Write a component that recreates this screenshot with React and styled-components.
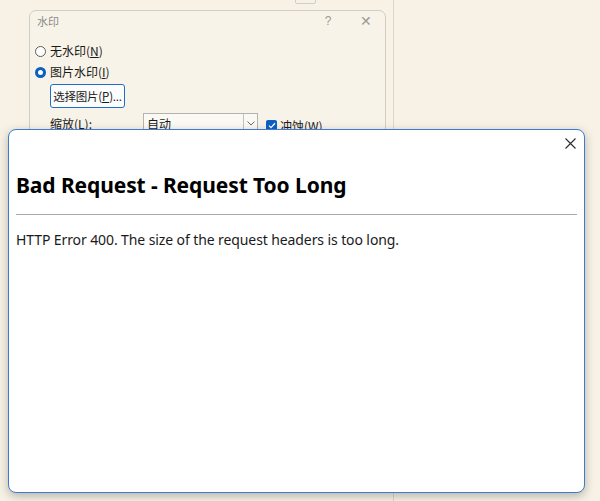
import React from "react";
import styled, { createGlobalStyle } from "styled-components";

const Global = createGlobalStyle`
  html, body { margin: 0; padding: 0; }
  body {
    width: 600px;
    height: 501px;
    overflow: hidden;
    background: #f7f2e5;
    font-family: "Noto Sans", "Noto Sans CJK SC", sans-serif;
  }
`;

const Desktop = styled.div`
  position: relative;
  width: 600px;
  height: 501px;
  overflow: hidden;
  background: #f7f2e5;
`;

/* window sitting behind everything, its right edge shows as a faint line */
const BackWindow = styled.div`
  position: absolute;
  left: -2px;
  top: -2px;
  width: 395px;
  height: 520px;
  border-right: 1px solid #d9d6ce;
  background: #f7f2e5;
`;

const Stub = styled.div`
  position: absolute;
  left: 295px;
  top: -10px;
  width: 19px;
  height: 12px;
  border: 1px solid #d0cec8;
  border-radius: 2px;
`;

const Dialog = styled.div`
  position: absolute;
  left: 29px;
  top: 10px;
  width: 355px;
  height: 200px;
  border: 1px solid #cfcdc7;
  border-radius: 7px;
  background: #f8f3e8;
  display: flex;
  flex-direction: column;
  font-family: "Noto Sans CJK SC", sans-serif;
  font-size: 12px;
  color: #1a1a1a;
`;

const TitleBar = styled.div`
  display: flex;
  align-items: center;
  height: 20px;
  padding: 0 0 0 7px;
  color: #8a8a8a;
  font-size: 11px;
`;

const TitleText = styled.span`
  flex: 1;
`;

const TitleGlyph = styled.span`
  width: 38px;
  text-align: center;
  color: #9a9a9a;
  font-family: "Liberation Sans", sans-serif;
  font-size: ${(p) => p.$size || 12}px;
`;

const Body = styled.div`
  display: flex;
  flex-direction: column;
  padding: 12px 0 0 5px;
  gap: 5px;
`;

const Option = styled.label`
  display: flex;
  align-items: center;
  gap: 4px;
  height: 16px;
  line-height: 16px;
`;

const Radio = styled.span`
  box-sizing: border-box;
  width: 11px;
  height: 11px;
  border-radius: 50%;
  border: ${(p) => (p.$on ? "3px solid #0a5fc2" : "1px solid #5c5c5c")};
  background: #fff;
`;

const Key = styled.span`
  text-decoration: underline;
  text-underline-offset: 1px;
`;

const PickButton = styled.div`
  box-sizing: border-box;
  margin: -1px 0 0 15px;
  width: 75px;
  height: 24px;
  border: 1px solid #1c6fc8;
  border-radius: 3px;
  background: #fcfcfc;
  display: flex;
  align-items: center;
  justify-content: center;
  white-space: nowrap;
  font-size: 11.5px;
  letter-spacing: -0.2px;
`;

const ScaleRow = styled.div`
  display: flex;
  align-items: center;
  margin: 0 0 0 15px;
  height: 20px;
  white-space: nowrap;
`;

const ScaleLabel = styled.span`
  width: 93px;
`;

const Select = styled.div`
  box-sizing: border-box;
  width: 115px;
  height: 20px;
  border: 1px solid #b5b3ad;
  background: #fbf9f3;
  display: flex;
  align-items: center;
`;

const SelectText = styled.span`
  flex: 1;
  padding-left: 3px;
`;

const Chevron = styled.span`
  width: 13px;
  height: 100%;
  border-left: 1px solid #c4c2bc;
  display: flex;
  align-items: center;
  justify-content: center;
`;

const Check = styled.span`
  width: 11px;
  height: 11px;
  margin: 5px 3px 0 8px;
  border-radius: 2px;
  background: #0a5fc2;
  display: flex;
  align-items: center;
  justify-content: center;
`;

const CheckText = styled.span`
  margin-top: 5px;
`;

const Modal = styled.div`
  position: absolute;
  left: 8px;
  top: 129px;
  width: 577px;
  height: 364px;
  box-sizing: border-box;
  border: 1px solid #3f7ad2;
  border-radius: 8px;
  background: #ffffff;
  box-shadow: 0 3px 10px rgba(60, 60, 60, 0.35);
  display: flex;
  flex-direction: column;
  padding: 0 7px;
`;

const ModalTop = styled.div`
  display: flex;
  justify-content: flex-end;
  height: 42px;
`;

const CloseBtn = styled.div`
  width: 12px;
  height: 12px;
  margin: 7px 1px 0 0;
  display: flex;
  align-items: center;
  justify-content: center;
`;

const Heading = styled.h2`
  margin: 0;
  font-family: "Noto Sans", sans-serif;
  font-weight: 700;
  font-size: 21px;
  line-height: 26px;
  color: #000;
  letter-spacing: -0.1px;
`;

const Rule = styled.hr`
  margin: 16px 0 15px;
  border: none;
  border-top: 1px solid #a9a9a9;
`;

const Message = styled.p`
  margin: 0;
  font-family: "Noto Sans", sans-serif;
  font-size: 14px;
  line-height: 20px;
  color: #1a1a1a;
  letter-spacing: -0.1px;
`;

export default function App() {
  return (
    <Desktop>
      <Global />
      <BackWindow />
      <Stub />
      <Dialog>
        <TitleBar>
          <TitleText>水印</TitleText>
          <TitleGlyph>?</TitleGlyph>
          <TitleGlyph $size={14}>✕</TitleGlyph>
        </TitleBar>
        <Body>
          <Option>
            <Radio />
            <span>
              无水印(<Key>N</Key>)
            </span>
          </Option>
          <Option>
            <Radio $on />
            <span>
              图片水印(<Key>I</Key>)
            </span>
          </Option>
          <PickButton>
            <span>
              选择图片(<Key>P</Key>)...
            </span>
          </PickButton>
          <ScaleRow>
            <ScaleLabel>
              缩放(<Key>L</Key>):
            </ScaleLabel>
            <Select>
              <SelectText>自动</SelectText>
              <Chevron>
                <svg width="8" height="5" viewBox="0 0 8 5">
                  <path d="M0.5 0.5 L4 4 L7.5 0.5" fill="none" stroke="#6a6a6a" strokeWidth="1" />
                </svg>
              </Chevron>
            </Select>
            <Check>
              <svg width="8" height="7" viewBox="0 0 8 7">
                <path d="M1 3.6 L3 5.6 L7 1.2" fill="none" stroke="#fff" strokeWidth="1.3" />
              </svg>
            </Check>
            <CheckText>
              冲蚀(<Key>W</Key>)
            </CheckText>
          </ScaleRow>
        </Body>
      </Dialog>
      <Modal>
        <ModalTop>
          <CloseBtn>
            <svg width="11" height="11" viewBox="0 0 11 11">
              <path d="M0.5 0.5 L10.5 10.5 M10.5 0.5 L0.5 10.5" stroke="#2b2b2b" strokeWidth="1.1" />
            </svg>
          </CloseBtn>
        </ModalTop>
        <Heading>Bad Request - Request Too Long</Heading>
        <Rule />
        <Message>HTTP Error 400. The size of the request headers is too long.</Message>
      </Modal>
    </Desktop>
  );
}
